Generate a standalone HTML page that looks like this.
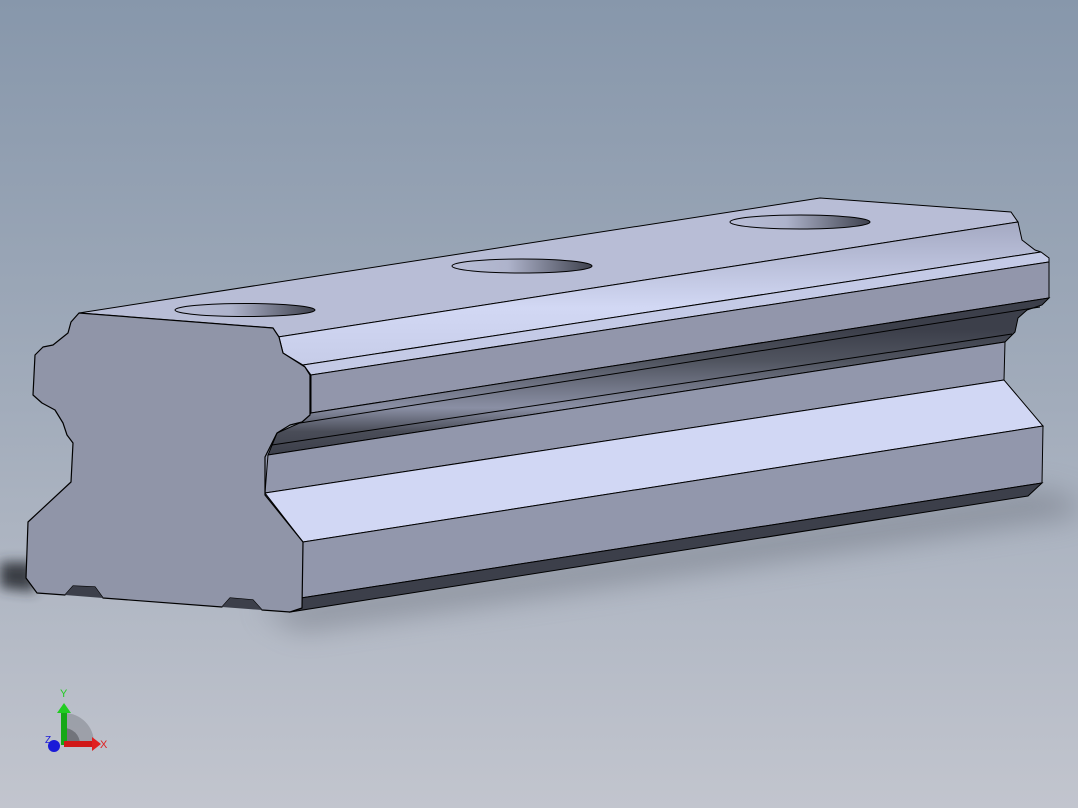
<!DOCTYPE html>
<html><head><meta charset="utf-8"><style>
html,body{margin:0;padding:0;width:1078px;height:808px;overflow:hidden}
svg{display:block}
</style></head><body>
<svg width="1078" height="808" viewBox="0 0 1078 808" xmlns="http://www.w3.org/2000/svg">
<defs>
<linearGradient id="bg" x1="0" y1="0" x2="0" y2="1">
<stop offset="0" stop-color="#8797ab"/><stop offset="0.5" stop-color="#a2acbb"/><stop offset="1" stop-color="#c2c5ce"/>
</linearGradient>
<linearGradient id="hole" x1="0" y1="0" x2="1" y2="0">
<stop offset="0" stop-color="#b8bdd6"/><stop offset="0.4" stop-color="#aeb3cb"/><stop offset="1" stop-color="#3e414d"/>
</linearGradient>
<linearGradient id="fil" x1="0" y1="0" x2="0" y2="1">
<stop offset="0" stop-color="#a4a9c2"/><stop offset="0.6" stop-color="#d2d8f4"/><stop offset="1" stop-color="#c6cce8"/>
</linearGradient>
<linearGradient id="groove" x1="0" y1="0" x2="0" y2="1">
<stop offset="0" stop-color="#3c3f4a"/><stop offset="0.2" stop-color="#3c3f4a"/><stop offset="0.4" stop-color="#50545f"/><stop offset="0.7" stop-color="#8a8fa4"/><stop offset="0.85" stop-color="#4a4d58"/><stop offset="1" stop-color="#3c3f4a"/>
</linearGradient>
<filter id="blur" x="-20%" y="-100%" width="140%" height="300%"><feGaussianBlur stdDeviation="14"/></filter>
<filter id="blur2" x="-100%" y="-100%" width="300%" height="300%"><feGaussianBlur stdDeviation="6"/></filter>
</defs>
<rect width="1078" height="808" fill="url(#bg)"/>
<polygon points="0,562 35,562 35,592 0,588" fill="#2e3038" filter="url(#blur2)" opacity="0.9"/>
<polygon points="260,608 1040,490 1078,500 1078,515 300,630" fill="#6f7480" filter="url(#blur)" opacity="0.55"/>
<polygon points="273,328 820,198 1011,212 1018,222 1022,240 1035,250 1049,258 1049,298 1042,305 1027,310 1018,318 1015,332 1005,342 1004,380 1043,426 1042,483 1028,496 290,612 302,608 303,542 265,495 265,457 277,433 302,422 310,415 310,375 305,367 283,353 279,337" fill="#9499ae"/>
<polygon points="79,313 820,198 1011,212 1018,222 278,337 273,328" fill="#b8bdd6" stroke="#000" stroke-width="1"/>
<polygon points="278,337 1018,222 1022,240 1035,250 1041,252 303,365 283,353 279,337" fill="url(#fil)" stroke="#000" stroke-width="1"/>
<polygon points="303,365 1041,252 1049,258 1049,262 311,375 305,367" fill="#c4cae6" stroke="#000" stroke-width="1"/>
<polygon points="311,375 1049,262 1049,298 311,413" fill="#9296ab" stroke="#000" stroke-width="1"/>
<polygon points="311,413 1049,298 1042,305 1027,310 1018,318 1015,332 1005,342 268,455 277,433 302,422" fill="url(#groove)" stroke="#000" stroke-width="1"/>
<line x1="300" y1="423" x2="1040" y2="307" stroke="#000" stroke-width="1"/>
<line x1="272" y1="445" x2="1012" y2="334" stroke="#000" stroke-width="1"/>
<polygon points="268,455 1005,342 1004,380 265,493" fill="#9297ac" stroke="#000" stroke-width="1"/>
<polygon points="265,493 1004,380 1043,426 303,542" fill="#d1d7f4" stroke="#000" stroke-width="1"/>
<polygon points="303,542 1043,426 1042,483 301,598" fill="#9297ac" stroke="#000" stroke-width="1"/>
<polygon points="301,598 1042,483 1028,496 290,612" fill="#3c3f4a" stroke="#000" stroke-width="1"/>
<polygon points="79,313 71,322 68,333 53,345 43,347 35,355 33,395 42,403 55,410 63,423 67,435 73,443 71,482 28,522 26,578 37,593 65,595 73,586 95,587 103,598 222,607 230,598 253,600 262,610 290,612 302,608 303,542 265,495 265,457 277,433 290,425 302,422 310,415 310,375 305,367 283,353 279,337 273,328" fill="#9095a8" stroke="#000" stroke-width="1.2" stroke-linejoin="round"/>
<polygon points="65,595 73,586 95,587 103,598" fill="#3c3f4a"/>
<polygon points="222,607 230,598 253,600 262,610" fill="#3c3f4a"/>
<ellipse cx="245" cy="310" rx="70" ry="6.5" fill="url(#hole)" stroke="#000" stroke-width="1"/>
<ellipse cx="522" cy="266" rx="70" ry="7" fill="url(#hole)" stroke="#000" stroke-width="1"/>
<ellipse cx="800" cy="222" rx="70" ry="7" fill="url(#hole)" stroke="#000" stroke-width="1"/>
<path d="M64,745 L64,713 A30,30 0 0 1 94,743 Z" fill="#7e8088" opacity="0.5"/>
<path d="M64,745 L64,728 A16,16 0 0 1 80,744 Z" fill="#55575e" opacity="0.6"/>
<rect x="61" y="711" width="6" height="34" fill="#16a816"/>
<polygon points="57,713 64,703 71,713" fill="#22cc22"/>
<rect x="64" y="741" width="30" height="6" fill="#d01818"/>
<polygon points="92,737 101,744 92,751" fill="#e02020"/>
<circle cx="54" cy="746" r="6" fill="#1a1ad8"/>
<text x="60" y="697" font-family="Liberation Sans, sans-serif" font-size="11" fill="#22cc22">Y</text>
<text x="100" y="748" font-family="Liberation Sans, sans-serif" font-size="11" fill="#e02020">X</text>
<text x="45" y="743" font-family="Liberation Sans, sans-serif" font-size="10" fill="#1a1ad8">Z</text>
</svg>
</body></html>
